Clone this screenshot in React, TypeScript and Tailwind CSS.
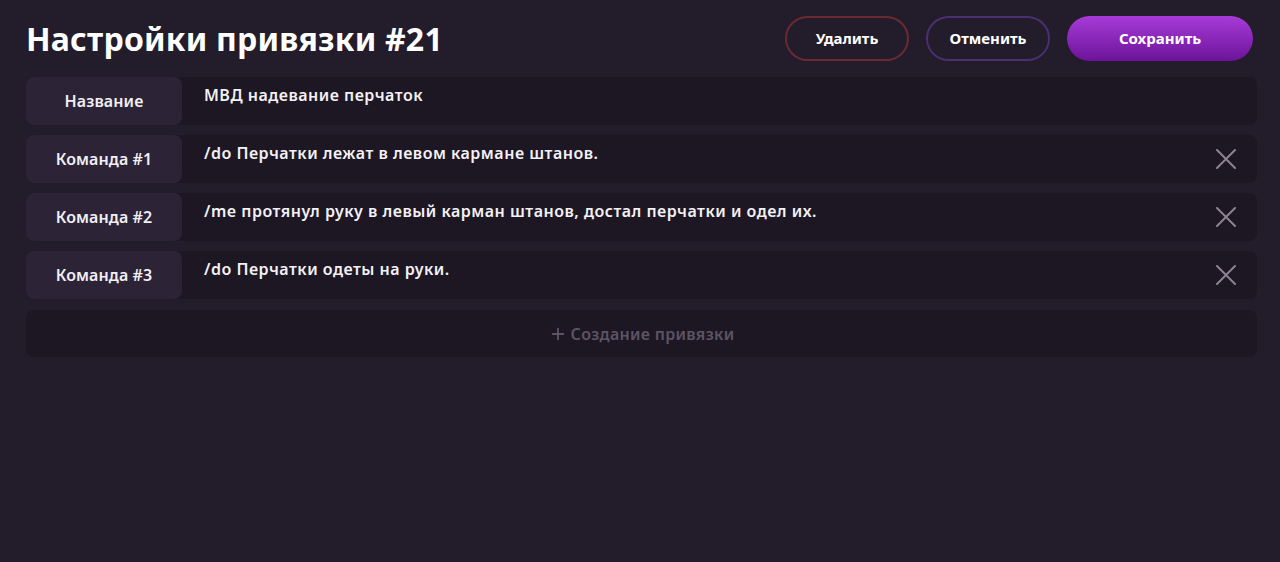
import { Plus } from 'lucide-react'

const commands = [
  '/do Перчатки лежат в левом кармане штанов.',
  '/me протянул руку в левый карман штанов, достал перчатки и одел их.',
  '/do Перчатки одеты на руки.',
]

function Row({ label, value, removable }: { label: string; value: string; removable?: boolean }) {
  return (
    <div className="flex h-12 rounded-lg bg-[#1c1723]">
      <div className="flex w-[156px] shrink-0 items-center justify-center rounded-lg bg-[#2c2436] text-base font-semibold tracking-[0.1px] text-[#f1eef4]">
        {label}
      </div>
      <div className="flex-1 pl-[22px] pt-[6px] text-base font-semibold tracking-[0.5px] text-[#f4f1f6]">
        {value}
      </div>
      {removable && (
        <button className="mr-[21px] flex items-center text-[#8b8294]">
          <svg width="20" height="20" viewBox="0 0 20 20" fill="none" stroke="currentColor" strokeWidth="2" strokeLinecap="round">
            <path d="M1 1L19 19M19 1L1 19" />
          </svg>
        </button>
      )}
    </div>
  )
}

export default function App() {
  return (
    <div
      className="min-h-[562px] bg-[#221c2b] pl-[26px] pr-[23px] pt-4"
      style={{ fontFamily: '"Noto Sans", sans-serif' }}
    >
      <div className="flex h-[45px] items-center justify-between">
        <h1 className="text-[32px] font-bold leading-none tracking-[0.2px] text-white">Настройки привязки #21</h1>
        <div className="flex gap-[17px] pr-[4px]">
          <button className="h-[45px] w-[124px] rounded-full border-2 border-[#6b2a33] text-[15px] font-bold text-white">
            Удалить
          </button>
          <button className="h-[45px] w-[124px] rounded-full border-2 border-[#4a2f73] text-[15px] font-bold text-white">
            Отменить
          </button>
          <button className="h-[45px] w-[186px] rounded-full bg-gradient-to-b from-[#a83ad8] to-[#6c139a] text-[15px] font-bold text-white">
            Сохранить
          </button>
        </div>
      </div>

      <div className="mt-4 flex flex-col gap-[10px]">
        <Row label="Название" value="МВД надевание перчаток" />
        {commands.map((c, i) => (
          <Row key={i} label={`Команда #${i + 1}`} value={c} removable />
        ))}
        <button className="mt-px flex h-[47px] items-center justify-center gap-1 rounded-lg bg-[#1c1723] text-base font-semibold tracking-[0.3px] text-[#5c5466]">
          <Plus className="h-[18px] w-[18px]" strokeWidth={2.5} />
          Создание привязки
        </button>
      </div>
    </div>
  )
}
